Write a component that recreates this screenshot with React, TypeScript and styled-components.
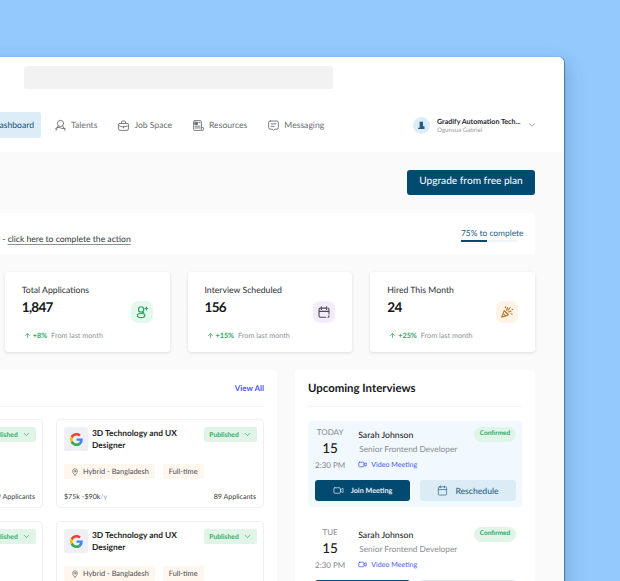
import type { ReactNode } from 'react'
import styled, { createGlobalStyle } from 'styled-components'
import { ArrowUp, Calendar, ChevronDown, LayoutDashboard, Video } from 'lucide-react'

const GlobalStyle = createGlobalStyle`
  html, body { margin: 0; padding: 0; }
  body {
    font-family: "Lato", "Noto Sans", sans-serif;
    color: #1b1d21;
    text-rendering: geometricPrecision;
  }
`

const Stage = styled.div`
  width: 620px;
  height: 581px;
  overflow: hidden;
  background: #93c9fd;
  display: flex;
  justify-content: flex-end;
  padding: 57px 56px 0 0;
  box-sizing: border-box;
`

const Window = styled.div`
  flex: 0 0 771px;
  height: 700px;
  background: #fafafa;
  border-radius: 6px 6px 0 0;
  box-shadow: 1px 0 1px rgba(40, 70, 110, 0.55), 4px 6px 18px rgba(30, 60, 100, 0.22);
`

const Header = styled.header`
  background: #fff;
  height: 95px;
  border-radius: 6px 6px 0 0;
  padding-top: 9px;
  box-sizing: border-box;
`

const SearchBar = styled.div`
  margin-left: 231px;
  width: 309px;
  height: 23px;
  background: #f2f2f2;
  border-radius: 3px;
`

const NavRow = styled.div`
  display: flex;
  align-items: center;
  margin-top: 23px;
  padding: 0 27px 0 176px;
`

const Nav = styled.nav`
  display: flex;
  gap: 7px;
`

const NavItem = styled.a<{ $active?: boolean }>`
  display: flex;
  align-items: center;
  gap: 4px;
  height: 26px;
  padding: 0 ${(p) => (p.$active ? 7 : 6)}px 0 7px;
  margin-right: ${(p) => (p.$active ? -1 : 0)}px;
  border-radius: 2px;
  font-size: 8.6px;
  color: ${(p) => (p.$active ? '#0f5278' : '#6a6e73')};
  background: ${(p) => (p.$active ? '#dcedf7' : 'transparent')};
  svg { width: 13px; height: 13px; flex: none; }
`

const Account = styled.div`
  margin-left: auto;
  display: flex;
  align-items: center;
  gap: 7px;
`

const Avatar = styled.div`
  width: 17px;
  height: 17px;
  border-radius: 50%;
  background: #dcedf7;
  display: grid;
  place-items: center;
  svg { width: 9px; height: 9px; }
`

const AccountText = styled.div`
  width: 83px;
`

const AccountName = styled.div`
  font-size: 7.1px;
  font-weight: 700;
  white-space: nowrap;
  color: #23262b;
`

const AccountUser = styled.div`
  font-size: 6.2px;
  color: #9ba0a6;
  margin-top: 1px;
`

const AccountChevron = styled(ChevronDown)`
  width: 10px;
  height: 10px;
  color: #8a9096;
`

const Main = styled.main`
  padding: 18px 29px 0;
`

const ActionRow = styled.div`
  display: flex;
  justify-content: flex-end;
`

const UpgradeButton = styled.button`
  width: 128px;
  height: 25px;
  padding: 0 0 4px;
  border: 0;
  border-radius: 3px;
  background: #034a70;
  color: #eef5f9;
  font: 500 10.15px "Lato", sans-serif;
  text-rendering: geometricPrecision;
`

const Banner = styled.div`
  display: flex;
  align-items: center;
  justify-content: space-between;
  height: 41px;
  margin-top: 18px;
  padding: 0 12px;
  background: #fff;
  border-radius: 3px;
`

const BannerText = styled.span`
  margin-left: 1px;
  font-size: 8.6px;
  color: #33373c;
  padding-top: 10px;
  white-space: nowrap;
  u { text-underline-offset: 2px; text-decoration-color: #8f9298; }
`

const Progress = styled.div`
  width: 62px;
  padding-top: 3px;
  font-size: 8.4px;
  white-space: nowrap;
  color: #1d5f86;
`

const ProgressTrack = styled.div`
  width: 56px;
  height: 2px;
  margin-top: 2px;
  background: #eef5fb;
`

const ProgressFill = styled.div`
  height: 100%;
  background: #034a70;
`

const Stats = styled.section`
  display: grid;
  grid-template-columns: repeat(4, 1fr);
  gap: 18px;
  margin-top: 18px;
`

const StatCard = styled.article`
  height: 80px;
  box-sizing: border-box;
  padding: 12px 17px 0;
  background: #fff;
  border-radius: 3px;
  box-shadow: 0 1px 3px rgba(30, 40, 60, 0.14);
`

const StatLabel = styled.div`
  font-size: 8.7px;
  color: #2c2f34;
`

const StatBody = styled.div`
  display: flex;
  justify-content: space-between;
  height: 34px;
`

const StatValue = styled.div`
  font-size: 13.5px;
  font-weight: 700;
  letter-spacing: -0.7px;
  margin-top: 4px;
  color: #15171a;
`

const StatIcon = styled.div<{ $bg: string; $fg: string }>`
  width: 22px;
  height: 22px;
  margin-top: 6px;
  border-radius: 7px;
  display: grid;
  place-items: center;
  background: ${(p) => p.$bg};
  color: ${(p) => p.$fg};
  svg { width: 14px; height: 14px; }
`

const StatFooter = styled.div`
  display: flex;
  align-items: center;
  margin-top: 2px;
  padding-left: 2px;
  font-size: 7.25px;
  color: #8c9298;
  svg { width: 7px; height: 7px; color: #2aa866; margin-right: 2px; }
`

const StatChange = styled.b`
  color: #2aa866;
  margin-right: 4px;
`

const Columns = styled.section`
  display: grid;
  grid-template-columns: 455px 240px;
  gap: 18px;
  margin-top: 18px;
`

const Panel = styled.div`
  background: #fff;
  border-radius: 4px 4px 0 0;
  padding: 0 13px;
  height: 400px;
`

const PanelHeader = styled.div`
  display: flex;
  align-items: center;
  justify-content: space-between;
  height: 36px;
  border-bottom: 1px solid #f1f2f4;
`

const PanelTitle = styled.h2`
  margin: 0;
  font-size: 11.4px;
  font-weight: 700;
  color: #17191c;
`

const ViewAll = styled.a`
  font-size: 8px;
  font-weight: 700;
  color: #4a57f0;
`

const JobGrid = styled.div`
  display: grid;
  grid-template-columns: 1fr 1fr;
  gap: 13px;
  margin-top: 12px;
`

const JobCard = styled.article`
  height: 89px;
  box-sizing: border-box;
  padding: 7px;
  border: 1px solid #eff0f2;
  border-radius: 4px;
`

const JobTop = styled.div`
  display: flex;
  align-items: flex-start;
  gap: 4px;
`

const LogoBox = styled.div`
  flex: 0 0 24px;
  height: 24px;
  background: #eff0f5;
  border-radius: 2px;
  display: grid;
  place-items: center;
  svg { width: 13px; height: 13px; }
`

const JobTitle = styled.div`
  flex: 1;
  font-size: 8.4px;
  font-weight: 700;
  line-height: 12px;
  color: #1d1f23;
`

const StatusBadge = styled.div`
  flex: 0 0 53px;
  margin-right: -1px;
  display: flex;
  align-items: center;
  justify-content: center;
  gap: 4px;
  height: 15px;
  background: #e0f5e8;
  border-radius: 2px;
  color: #35ad6c;
  font-size: 6.8px;
  font-weight: 700;
  svg { width: 9px; height: 9px; }
`

const TagRow = styled.div`
  display: flex;
  gap: 8px;
  margin-top: 13px;
`

const Tag = styled.div`
  display: flex;
  align-items: center;
  gap: 4px;
  height: 15px;
  padding: 0 6px;
  background: #fff6ed;
  border-radius: 2px;
  font-size: 7.4px;
  color: #4a4d52;
  svg { width: 8px; height: 8px; margin-left: 1px; }
`

const JobFooter = styled.div`
  display: flex;
  justify-content: space-between;
  margin-top: 13px;
  font-size: 7.1px;
  color: #3b3e43;
  i { font-style: normal; color: #9ba5ad; }
`

const InterviewList = styled.div`
  display: flex;
  flex-direction: column;
  gap: 14px;
  margin-top: 14px;
`

const Interview = styled.article<{ $highlight?: boolean }>`
  height: 86px;
  box-sizing: border-box;
  padding: 6px 6px 0 7px;
  border-radius: 4px;
  background: ${(p) => (p.$highlight ? '#f1f8fe' : 'transparent')};
`

const InterviewTop = styled.div`
  display: flex;
  height: 47px;
`

const DateColumn = styled.div`
  flex: 0 0 29px;
  margin-right: 13px;
  text-align: center;
  white-space: nowrap;
  color: #83888e;
  font-size: 8px;
  line-height: 10px;
`

const DateDay = styled.div`
  font-size: 13.5px;
  font-weight: 500;
  color: #17191c;
  line-height: 18px;
  margin: 2px 0 3px;
`

const InterviewInfo = styled.div`
  flex: 1;
  padding-top: 2px;
`

const InterviewName = styled.div`
  font-size: 8.7px;
  font-weight: 500;
  color: #25282c;
`

const InterviewRole = styled.div`
  font-size: 8.3px;
  color: #878c92;
  margin: 4px 0 0 1px;
`

const MeetingLink = styled.div`
  display: flex;
  align-items: center;
  gap: 4px;
  margin-top: 6px;
  font-size: 7.1px;
  color: #4a57f0;
  svg { width: 9px; height: 9px; }
`

const ConfirmedPill = styled.div`
  width: 42px;
  height: 15px;
  line-height: 13px;
  text-align: center;
  border-radius: 8px;
  background: #e0f5e8;
  color: #2aa866;
  font-size: 6.5px;
  font-weight: 700;
`

const InterviewActions = styled.div`
  display: grid;
  grid-template-columns: 95px 96px;
  gap: 10px;
  margin-top: 6px;
`

const MeetingButton = styled.button<{ $primary?: boolean }>`
  display: flex;
  align-items: center;
  justify-content: center;
  gap: 7px;
  height: 21px;
  padding: 0;
  border: 0;
  border-radius: 3px;
  font-family: "Lato", sans-serif;
  text-rendering: geometricPrecision;
  font-weight: ${(p) => (p.$primary ? 700 : 500)};
  font-size: ${(p) => (p.$primary ? 7.2 : 8.6)}px;
  background: ${(p) => (p.$primary ? '#034a70' : '#dcecf6')};
  color: ${(p) => (p.$primary ? '#e6eff5' : '#2b6488')};
  svg { width: 11px; height: 11px; stroke-width: 1.5; }
`

function GoogleLogo() {
  return (
    <svg viewBox="0 0 48 48">
      <path fill="#EA4335" d="M24 9.5c3.5 0 6.7 1.2 9.2 3.6l6.9-6.9C35.9 2.4 30.5 0 24 0 14.6 0 6.5 5.4 2.6 13.2l8 6.2C12.5 13.6 17.8 9.5 24 9.5z" />
      <path fill="#4285F4" d="M46.9 24.5c0-1.6-.1-3.1-.4-4.5H24v9h12.9c-.6 3-2.2 5.5-4.8 7.2l7.7 6c4.5-4.2 7.1-10.3 7.1-17.7z" />
      <path fill="#FBBC05" d="M10.5 28.6c-.5-1.4-.8-3-.8-4.6s.3-3.2.8-4.6l-8-6.2C.9 16.5 0 20.1 0 24s.9 7.5 2.6 10.8l7.9-6.2z" />
      <path fill="#34A853" d="M24 48c6.500 0 11.900-2.100 15.900-5.800l-7.700-6c-2.200 1.400-4.900 2.300-8.200 2.300-6.200 0-11.500-4.200-13.400-9.800l-8 6.200C6.500 42.600 14.600 48 24 48z" />
    </svg>
  )
}

function Glyph({ children }: { children: ReactNode }) {
  return (
    <svg viewBox="0 0 16 16" fill="none" stroke="currentColor" strokeWidth="1.1" strokeLinecap="round" strokeLinejoin="round">
      {children}
    </svg>
  )
}

const TalentsIcon = () => (
  <Glyph>
    <circle cx="8" cy="5.500" r="3.800" />
    <path d="M5.200 8.500 2.500 14M10.800 8.500 13.500 14M2 11.500c2-1.300 4-1.500 6-.5s4 .8 6 .5" />
  </Glyph>
)

const JobSpaceIcon = () => (
  <Glyph>
    <path d="M3 5.500h10a1.200 1.200 0 0 1 1.200 1.200v5.300a2 2 0 0 1-2 2H3.800a2 2 0 0 1-2-2V6.700A1.200 1.200 0 0 1 3 5.500z" />
    <path d="M5.500 5.500V3.800A1.300 1.300 0 0 1 6.800 2.500h2.400a1.300 1.300 0 0 1 1.300 1.300v1.700M2 8c3.800 2.300 8.200 2.300 12 0M8 9v2" />
  </Glyph>
)

const ResourcesIcon = () => (
  <Glyph>
    <rect x="2" y="2" width="9.500" height="12" rx="1" />
    <rect x="3.800" y="4" width="3" height="2.800" fill="currentColor" />
    <path d="M8.300 4.500h1.500M3.800 8.800h5.900M3.800 11h5.900M11.500 10.500h1.800a1 1 0 0 1 1 1V13a1 1 0 0 1-1 1h-1.800" />
  </Glyph>
)

const MessagingIcon = () => (
  <Glyph>
    <path d="M4 2.500h8A2 2 0 0 1 14 4.500v6a2 2 0 0 1-2 2H9.500L8 14l-1.500-1.500H4a2 2 0 0 1-2-2v-6a2 2 0 0 1 2-2z" />
    <path d="M5 6h6M5 9h3.800" />
  </Glyph>
)

const ApplicantsIcon = () => (
  <Glyph>
    <circle cx="7" cy="5" r="3" strokeWidth="1.400" />
    <ellipse cx="7" cy="12" rx="4.300" ry="2.400" strokeWidth="1.400" />
    <path d="M10 9 8.500 8M13 2.500v3M11.500 4h3" strokeWidth="1.400" />
  </Glyph>
)

const ScheduleIcon = () => (
  <Glyph>
    <path d="M10 3.500H4a1.700 1.700 0 0 0-1.700 1.700v7.100A1.700 1.700 0 0 0 4 14h6M12.500 3.500a1.500 1.500 0 0 1 1.200 1.700v5M13.700 12.500v.3a1.200 1.200 0 0 1-1.200 1.200M5 2v3M11 2v3M2.300 7.300h11.400" strokeWidth="1.300" />
  </Glyph>
)

const PopperIcon = () => (
  <Glyph>
    <path d="M2 14 4.700 6.500 9.500 11.300z" strokeWidth="1.300" />
    <path d="M4.500 10.500 6.500 12.500M6 7.500 9 10.500M7.500 6 8.500 3M9.500 8l3-1M9 6l2.500-3M12.500 10l1.500.5M6.500 3 6 2M14 5h.5" strokeWidth="1.300" />
  </Glyph>
)

const PinIcon = () => (
  <Glyph>
    <path d="M8 14.500S3 10 3 6.500a5 5 0 0 1 10 0C13 10 8 14.500 8 14.500z" />
    <circle cx="8" cy="6.500" r="1.900" />
  </Glyph>
)

const BuildingIcon = () => (
  <svg viewBox="0 0 12 12">
    <path fill="#1d5f86" d="M3.500 1h4.500v6H10v3.500H1.500V9h2z" />
  </svg>
)

function StatTile({ label, value, change, bg, fg, icon }: { label: string; value: string; change: string; bg: string; fg: string; icon: ReactNode }) {
  return (
    <StatCard>
      <StatLabel>{label}</StatLabel>
      <StatBody>
        <StatValue>{value}</StatValue>
        <StatIcon $bg={bg} $fg={fg}>{icon}</StatIcon>
      </StatBody>
      <StatFooter>
        <ArrowUp strokeWidth={2.5} />
        <StatChange>{change}</StatChange>
        From last month
      </StatFooter>
    </StatCard>
  )
}

function Job() {
  return (
    <JobCard>
      <JobTop>
        <LogoBox><GoogleLogo /></LogoBox>
        <JobTitle>3D Technology and UX Designer</JobTitle>
        <StatusBadge>Published <ChevronDown /></StatusBadge>
      </JobTop>
      <TagRow>
        <Tag><PinIcon /> Hybrid - Bangladesh</Tag>
        <Tag>Full-time</Tag>
      </TagRow>
      <JobFooter>
        <span>$75k -$90k<i>/y</i></span>
        <span>89 Applicants</span>
      </JobFooter>
    </JobCard>
  )
}

function InterviewItem({ day, highlight }: { day: string; highlight?: boolean }) {
  return (
    <Interview $highlight={highlight}>
      <InterviewTop>
        <DateColumn>
          {day}
          <DateDay>15</DateDay>
          2:30 PM
        </DateColumn>
        <InterviewInfo>
          <InterviewName>Sarah Johnson</InterviewName>
          <InterviewRole>Senior Frontend Developer</InterviewRole>
          <MeetingLink><Video /> Video Meeting</MeetingLink>
        </InterviewInfo>
        <ConfirmedPill>Confirmed</ConfirmedPill>
      </InterviewTop>
      <InterviewActions>
        <MeetingButton $primary><Video /> Join Meeting</MeetingButton>
        <MeetingButton><Calendar /> Reschedule</MeetingButton>
      </InterviewActions>
    </Interview>
  )
}

export default function App() {
  return (
    <>
      <GlobalStyle />
      <Stage>
        <Window>
          <Header>
            <SearchBar />
            <NavRow>
              <Nav>
                <NavItem $active><LayoutDashboard /> Dashboard</NavItem>
                <NavItem><TalentsIcon /> Talents</NavItem>
                <NavItem><JobSpaceIcon /> Job Space</NavItem>
                <NavItem><ResourcesIcon /> Resources</NavItem>
                <NavItem><MessagingIcon /> Messaging</NavItem>
              </Nav>
              <Account>
                <Avatar><BuildingIcon /></Avatar>
                <AccountText>
                  <AccountName>Gradify Automation Tech...</AccountName>
                  <AccountUser>Ogunsua Gabriel</AccountUser>
                </AccountText>
                <AccountChevron />
              </Account>
            </NavRow>
          </Header>
          <Main>
            <ActionRow>
              <UpgradeButton>Upgrade from free plan</UpgradeButton>
            </ActionRow>
            <Banner>
              <BannerText>Your company profile is still incomplete now - <u>click here to complete the action</u></BannerText>
              <Progress>
                75% to complete
                <ProgressTrack><ProgressFill style={{ width: '46%' }} /></ProgressTrack>
              </Progress>
            </Banner>
            <Stats>
              <StatTile label="Active Jobs" value="24" change="+8%" bg="#e6f8ee" fg="#2aa866" icon={<ApplicantsIcon />} />
              <StatTile label="Total Applications" value="1,847" change="+8%" bg="#e6f8ee" fg="#2aa866" icon={<ApplicantsIcon />} />
              <StatTile label="Interview Scheduled" value="156" change="+15%" bg="#f3ecfc" fg="#4a4d55" icon={<ScheduleIcon />} />
              <StatTile label="Hired This Month" value="24" change="+25%" bg="#fff3e6" fg="#b97a35" icon={<PopperIcon />} />
            </Stats>
            <Columns>
              <Panel>
                <PanelHeader>
                  <PanelTitle>Recent Job Posts</PanelTitle>
                  <ViewAll>View All</ViewAll>
                </PanelHeader>
                <JobGrid>
                  <Job />
                  <Job />
                  <Job />
                  <Job />
                </JobGrid>
              </Panel>
              <Panel>
                <PanelHeader>
                  <PanelTitle>Upcoming Interviews</PanelTitle>
                </PanelHeader>
                <InterviewList>
                  <InterviewItem day="TODAY" highlight />
                  <InterviewItem day="TUE" />
                </InterviewList>
              </Panel>
            </Columns>
          </Main>
        </Window>
      </Stage>
    </>
  )
}
